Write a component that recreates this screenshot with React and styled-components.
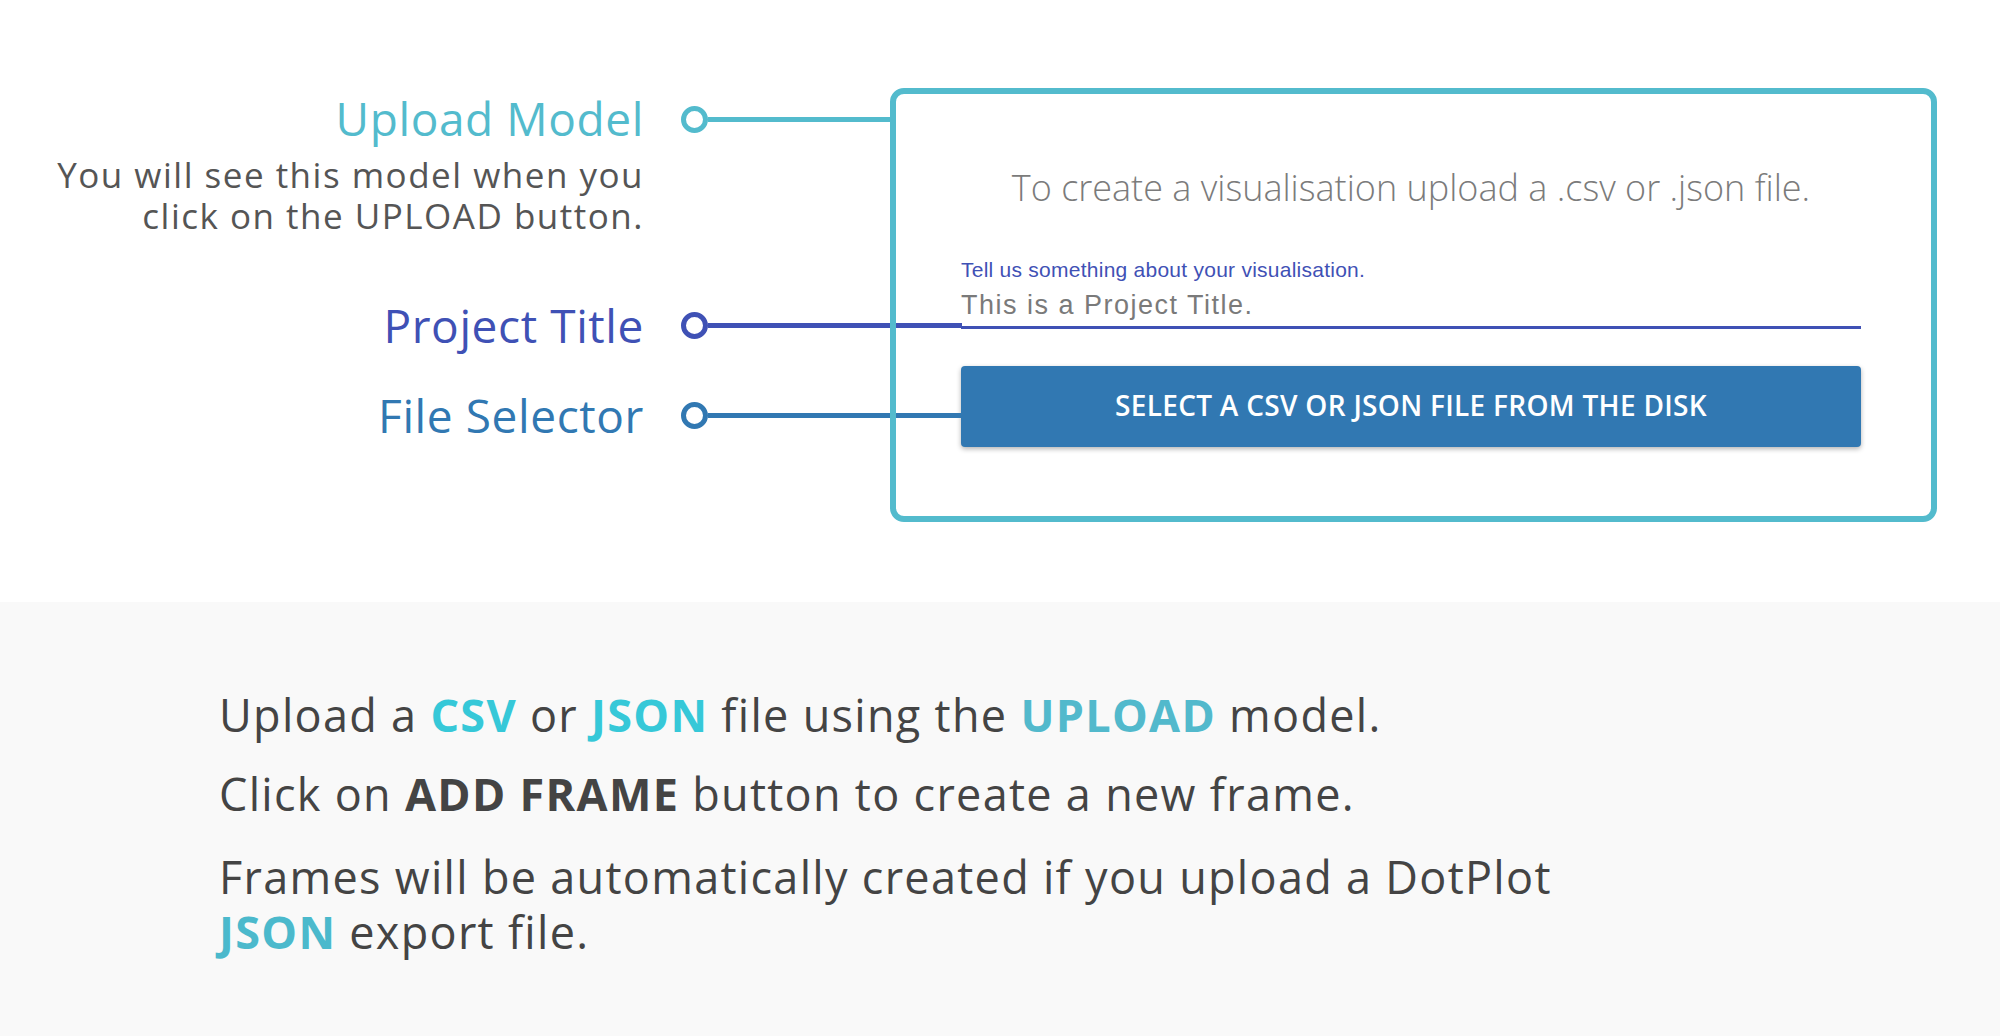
import React from "react";
import styled, { createGlobalStyle } from "styled-components";

const GlobalStyle = createGlobalStyle`
  html, body { margin: 0; padding: 0; background: #ffffff; }
  body { font-family: "Open Sans", "Noto Sans", sans-serif; }
  * { box-sizing: border-box; }
`;

const TEAL = "#53bbcd";
const INDIGO = "#3f51b5";
const BLUE = "#3178b2";

const Page = styled.div`
  width: 2000px;
  height: 1036px;
  display: flex;
  flex-direction: column;
  overflow: hidden;
`;

const TopSection = styled.section`
  height: 602px;
  flex: none;
  display: flex;
  align-items: flex-start;
  padding-top: 88px;
  background: #ffffff;
`;

const LeftColumn = styled.div`
  width: 644px;
  flex: none;
  display: flex;
  flex-direction: column;
  align-items: flex-end;
  text-align: right;
  margin-top: 4px;
`;

const AnnotationRow = styled.div`
  position: relative;
  margin-top: ${(p) => p.$gap || 0}px;
`;

const Label = styled.div`
  font-family: "Open Sans", sans-serif;
  font-weight: 400;
  font-size: 46px;
  line-height: 52px;
  letter-spacing: 0.6px;
  color: ${(p) => p.$color};
  white-space: nowrap;
`;

const Description = styled.p`
  margin: 10px 0 0;
  font-family: "Open Sans", sans-serif;
  font-size: 35px;
  line-height: 41px;
  letter-spacing: 1.5px;
  color: #555555;
  white-space: nowrap;
`;

const Connector = styled.div`
  position: absolute;
  left: calc(100% + 37px);
  top: ${(p) => p.$top}px;
  display: flex;
  align-items: center;
  z-index: 1;
`;

const Dot = styled.span`
  width: 27px;
  height: 27px;
  border-radius: 50%;
  border: 5px solid ${(p) => p.$color};
  background: #ffffff;
  flex: none;
`;

const Line = styled.span`
  width: ${(p) => p.$length}px;
  height: 5px;
  background: ${(p) => p.$color};
  flex: none;
`;

const Modal = styled.div`
  position: relative;
  margin-left: 246px;
  width: 1047px;
  height: 434px;
  flex: none;
  padding: 6px 76px 6px 71px;
  display: flex;
  flex-direction: column;
  background: #ffffff;
  border-radius: 14px;

  &::after {
    content: "";
    position: absolute;
    inset: 0;
    border: 6px solid ${TEAL};
    border-radius: 14px;
    z-index: 2;
    pointer-events: none;
  }
`;

const Heading = styled.h2`
  margin: 72px 0 0;
  font-family: "Open Sans", sans-serif;
  font-weight: 300;
  font-size: 36px;
  line-height: 44px;
  color: #7b7b7b;
  text-align: center;
  white-space: nowrap;
`;

const Field = styled.label`
  display: flex;
  flex-direction: column;
  margin-top: 48px;
  border-bottom: 3px solid ${INDIGO};
  padding-bottom: 5px;
`;

const FieldLabel = styled.span`
  font-family: "Liberation Sans", Arial, sans-serif;
  font-size: 21px;
  line-height: 24px;
  letter-spacing: 0.25px;
  color: ${INDIGO};
`;

const FieldValue = styled.span`
  margin-top: 7px;
  font-family: "Liberation Sans", Arial, sans-serif;
  font-size: 27px;
  line-height: 32px;
  letter-spacing: 1.5px;
  color: #7a7a7a;
`;

const SelectButton = styled.button`
  margin-top: 37px;
  height: 81px;
  width: 100%;
  padding: 0 0 4px;
  border: none;
  border-radius: 4px;
  background: ${BLUE};
  box-shadow: 0 2px 5px rgba(0, 0, 0, 0.3);
  color: #ffffff;
  font-family: "Open Sans", sans-serif;
  font-weight: 600;
  font-size: 28px;
  letter-spacing: 0.3px;
  text-transform: uppercase;
  cursor: pointer;
`;

const BottomSection = styled.section`
  flex: 1;
  background: #f9f9f9;
  padding: 85px 0 0 219px;
`;

const Paragraph = styled.p`
  margin: ${(p) => p.$gap || 0}px 0 0;
  max-width: 1360px;
  font-family: "Open Sans", sans-serif;
  font-size: 45px;
  line-height: 55px;
  letter-spacing: 1.3px;
  color: #444444;
`;

const Strong = styled.strong`
  font-weight: 700;
  color: ${(p) => p.$color || "#444444"};
`;

const annotations = [
  { id: "upload", text: "Upload Model", color: TEAL, gap: 0, top: 14, line: 186 },
  { id: "title", text: "Project Title", color: INDIGO, gap: 63, top: 13, line: 254 },
  { id: "file", text: "File Selector", color: BLUE, gap: 38, top: 13, line: 253 },
];

function Annotation({ a }) {
  return (
    <AnnotationRow $gap={a.gap}>
      <Label $color={a.color}>{a.text}</Label>
      <Connector $top={a.top}>
        <Dot $color={a.color} />
        <Line $color={a.color} $length={a.line} />
      </Connector>
    </AnnotationRow>
  );
}

export default function App() {
  return (
    <>
      <GlobalStyle />
      <Page>
        <TopSection>
          <LeftColumn>
            <Annotation a={annotations[0]} />
            <Description>
              You will see this model when you
              <br />
              click on the UPLOAD button.
            </Description>
            <Annotation a={annotations[1]} />
            <Annotation a={annotations[2]} />
          </LeftColumn>
          <Modal>
            <Heading>To create a visualisation upload a .csv or .json file.</Heading>
            <Field>
              <FieldLabel>Tell us something about your visualisation.</FieldLabel>
              <FieldValue>This is a Project Title.</FieldValue>
            </Field>
            <SelectButton>Select a CSV or JSON file from the disk</SelectButton>
          </Modal>
        </TopSection>
        <BottomSection>
          <Paragraph>
            Upload a <Strong $color="#36c8d8">CSV</Strong> or{" "}
            <Strong $color="#36c8d8">JSON</Strong> file using the{" "}
            <Strong $color="#52b9cc">UPLOAD</Strong> model.
          </Paragraph>
          <Paragraph $gap={24}>
            Click on <Strong>ADD FRAME</Strong> button to create a new frame.
          </Paragraph>
          <Paragraph $gap={28}>
            Frames will be automatically created if you upload a DotPlot{" "}
            <Strong $color="#4bb9cc">JSON</Strong> export file.
          </Paragraph>
        </BottomSection>
      </Page>
    </>
  );
}
